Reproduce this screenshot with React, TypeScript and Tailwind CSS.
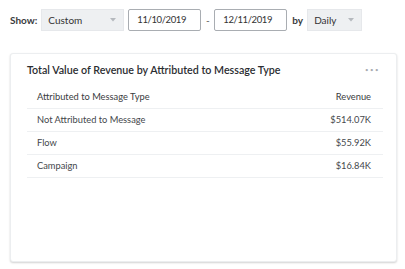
const rows = [
  { type: "Not Attributed to Message", revenue: "$514.07K" },
  { type: "Flow", revenue: "$55.92K" },
  { type: "Campaign", revenue: "$16.84K" },
]

function Select({ label, width }: { label: string; width: string }) {
  return (
    <div className={`${width} h-[22px] bg-[#eef0f2] border border-[#e6e8eb] flex items-center justify-between pl-[6px] pr-[7px] text-[10px] text-[#333]`}>
      <span>{label}</span>
      <svg width="6" height="4" viewBox="0 0 6 4" className="text-[#b5b9be]">
        <path d="M0 0h6L3 3.5z" fill="currentColor" />
      </svg>
    </div>
  )
}

function DateInput({ value }: { value: string }) {
  return (
    <div className="w-[73px] h-[22px] border border-[#a9adb2] rounded-[2px] bg-white flex items-center pl-[8px] text-[9.5px] tracking-[-0.4px] text-[#333]">
      {value}
    </div>
  )
}

export default function App() {
  return (
    <div className="w-[405px] h-[269px] bg-white font-['Lato','Liberation_Sans',sans-serif] text-[#2d2f33]">
      {/* filter toolbar */}
      <div className="flex items-center pt-[9px] pl-[10px]">
        <span className="text-[10px] font-bold text-[#3a3c40] mr-[4px]">Show:</span>
        <Select label="Custom" width="w-[83px]" />
        <div className="ml-[4px]">
          <DateInput value="11/10/2019" />
        </div>
        <span className="w-[13px] text-center text-[10px] text-[#555]">-</span>
        <DateInput value="12/11/2019" />
        <span className="text-[10px] font-bold text-[#3a3c40] ml-[5px] mr-[4px]">by</span>
        <Select label="Daily" width="w-[55px]" />
      </div>

      {/* chart card */}
      <div className="ml-[10px] mr-[8px] mt-[22px] h-[209px] bg-white border border-[#eceef0] rounded-[3px] shadow-[0_1px_2px_rgba(0,0,0,0.18)]">
        <div className="flex items-center justify-between pl-[16px] pr-[16px] pt-[8px]">
          <h2 className="text-[10.7px] font-semibold text-[#2b2d31]">
            Total Value of Revenue by Attributed to Message Type
          </h2>
          <span className="text-[6px] leading-none tracking-[1.5px] text-[#a8acb1]">•••</span>
        </div>

        <div className="ml-[16px] mr-[13px] mt-[8px] text-[9.3px]">
          <div className="flex justify-between pl-[10px] pr-[12px] h-[23px] items-center border-b border-[#eef0f2] text-[#3a3c40]">
            <span>Attributed to Message Type</span>
            <span>Revenue</span>
          </div>
          {rows.map((row) => (
            <div
              key={row.type}
              className="flex justify-between pl-[10px] pr-[12px] h-[23px] items-center border-b border-[#eef0f2] text-[#44474b]"
            >
              <span>{row.type}</span>
              <span>{row.revenue}</span>
            </div>
          ))}
        </div>
      </div>
    </div>
  )
}
